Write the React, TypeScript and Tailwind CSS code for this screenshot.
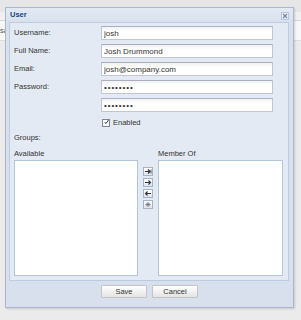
import React from "react";

const font = { fontFamily: '"Liberation Sans", Arial, sans-serif' };

function Field({ label, value, password }: { label: string; value: string; password?: boolean }) {
  return (
    <div className="flex h-[14px] items-center mb-[4px]">
      <div className="w-[87px] text-[7.5px] text-[#333]">{label}</div>
      <input
        readOnly
        type={password ? "password" : "text"}
        value={value}
        className={`w-[172px] h-[14px] border border-[#c2c6d2] border-t-[#a9afbf] bg-white bg-gradient-to-b from-[#f2f2f2] to-white to-[40%] px-[2px] text-[8px] text-[#333] outline-none ${password ? "tracking-[0.9px]" : ""}`}
        style={font}
      />
    </div>
  );
}

function Arrow({ kind }: { kind: number }) {
  return (
    <div className="w-[10px] h-[9px] mb-[2px] border border-[#a4b3c9] bg-gradient-to-b from-white to-[#dde5f0] flex items-center justify-center">
      <svg width="8" height="7" viewBox="0 0 8 7">
        {kind === 0 && (
          <g stroke="#333" strokeWidth="1.2" fill="none">
            <path d="M1 3.5H6M4 1.5L6 3.5L4 5.5" />
            <path d="M7 1.5V5.5" strokeWidth="0.8" />
          </g>
        )}
        {kind === 1 && (
          <g stroke="#333" strokeWidth="1.1" fill="none">
            <path d="M1 3.5H6.5M4.5 1.5L6.5 3.5L4.5 5.5" />
          </g>
        )}
        {kind === 2 && (
          <g stroke="#333" strokeWidth="1.1" fill="none">
            <path d="M7 3.5H1.5M3.5 1.5L1.5 3.5L3.5 5.5" />
          </g>
        )}
        {kind === 3 && (
          <g stroke="#777" strokeWidth="0.9" fill="none">
            <path d="M4 1V6M1.5 3.5H6.5M2.2 1.7L5.8 5.3M5.8 1.7L2.2 5.3" />
          </g>
        )}
      </svg>
    </div>
  );
}

export default function App() {
  return (
    <div className="relative w-[301px] h-[320px] bg-[#ebebeb] overflow-hidden" style={font}>
      {/* background app hint */}
      <div className="h-[12px] bg-[#e6e6e6]" />
      <div className="h-[9px] bg-[#f0f0f0] border-b border-[#d6d6d6]" />
      <div className="h-[20px] bg-[#f7f7f7] border-b border-[#dcdcdc] flex items-center">
        <span className="text-[7.5px] text-[#555]">sar</span>
      </div>

      {/* window */}
      <div className="absolute left-[5px] top-[7px] w-[289px] h-[301px] bg-[#d7e0ec] border border-[#a9b8cc] shadow-[1px_1px_2px_rgba(0,0,0,0.15)] flex flex-col">
        <div className="h-[14px] flex items-center justify-between pl-[4px] pr-[4px] bg-gradient-to-b from-[#e3eaf4] to-[#d7e0ec]">
          <span className="text-[7.5px] font-bold text-[#15428b]">User</span>
          <div className="w-[8px] h-[8px] mt-[2px] border border-[#b9c7da] bg-[#e9eef6] flex items-center justify-center">
            <svg width="6" height="6" viewBox="0 0 6 6">
              <path d="M1 1L5 5M5 1L1 5" stroke="#6f86a8" strokeWidth="1.1" />
            </svg>
          </div>
        </div>
        <div className="ml-[3px] mr-[4px] h-[259px] bg-[#e4eaf4] border border-[#bccbdf] pt-[3px] pl-[4px] pr-[4px]">
          <Field label="Username:" value="josh" />
          <Field label="Full Name:" value="Josh Drummond" />
          <Field label="Email:" value="josh@company.com" />
          <Field label="Password:" value="secret12" password />
          <Field label="" value="secret12" password />
          <div className="flex h-[13px] items-center pl-[88px]">
            <div className="w-[8px] h-[8px] border border-[#7d8796] bg-white flex items-center justify-center">
              <svg width="8" height="8" viewBox="0 0 8 8" className="-mt-[2px] ml-[1px]">
                <path d="M1 4L3 6.5L7.5 0.5" stroke="#222" strokeWidth="1.4" fill="none" />
              </svg>
            </div>
            <span className="ml-[3px] text-[7.5px] text-[#333]">Enabled</span>
          </div>
          <div className="mt-[3px] h-[12px] flex items-center text-[7.5px] text-[#333]">Groups:</div>
          <div className="mt-[4px] h-[12px] flex items-center text-[7.5px] text-[#333]">
            <span className="w-[144px]">Available</span>
            <span>Member Of</span>
          </div>
          <div className="flex">
            <div className="w-[124px] h-[116px] bg-white border border-[#b5c5da]" />
            <div className="w-[20px] flex flex-col items-center pt-[7px]">
              <Arrow kind={0} />
              <Arrow kind={1} />
              <Arrow kind={2} />
              <Arrow kind={3} />
            </div>
            <div className="w-[125px] h-[116px] bg-white border border-[#b5c5da]" />
          </div>
        </div>
        <div className="flex justify-center gap-[5px] mt-[4px]">
          <button className="w-[46px] h-[13px] border border-[#c4c4c4] bg-gradient-to-b from-white to-[#e4e4e4] text-[7.5px] text-[#333] rounded-[1px]" style={font}>
            Save
          </button>
          <button className="w-[46px] h-[13px] border border-[#c4c4c4] bg-gradient-to-b from-white to-[#e4e4e4] text-[7.5px] text-[#333] rounded-[1px]" style={font}>
            Cancel
          </button>
        </div>
      </div>
    </div>
  );
}
